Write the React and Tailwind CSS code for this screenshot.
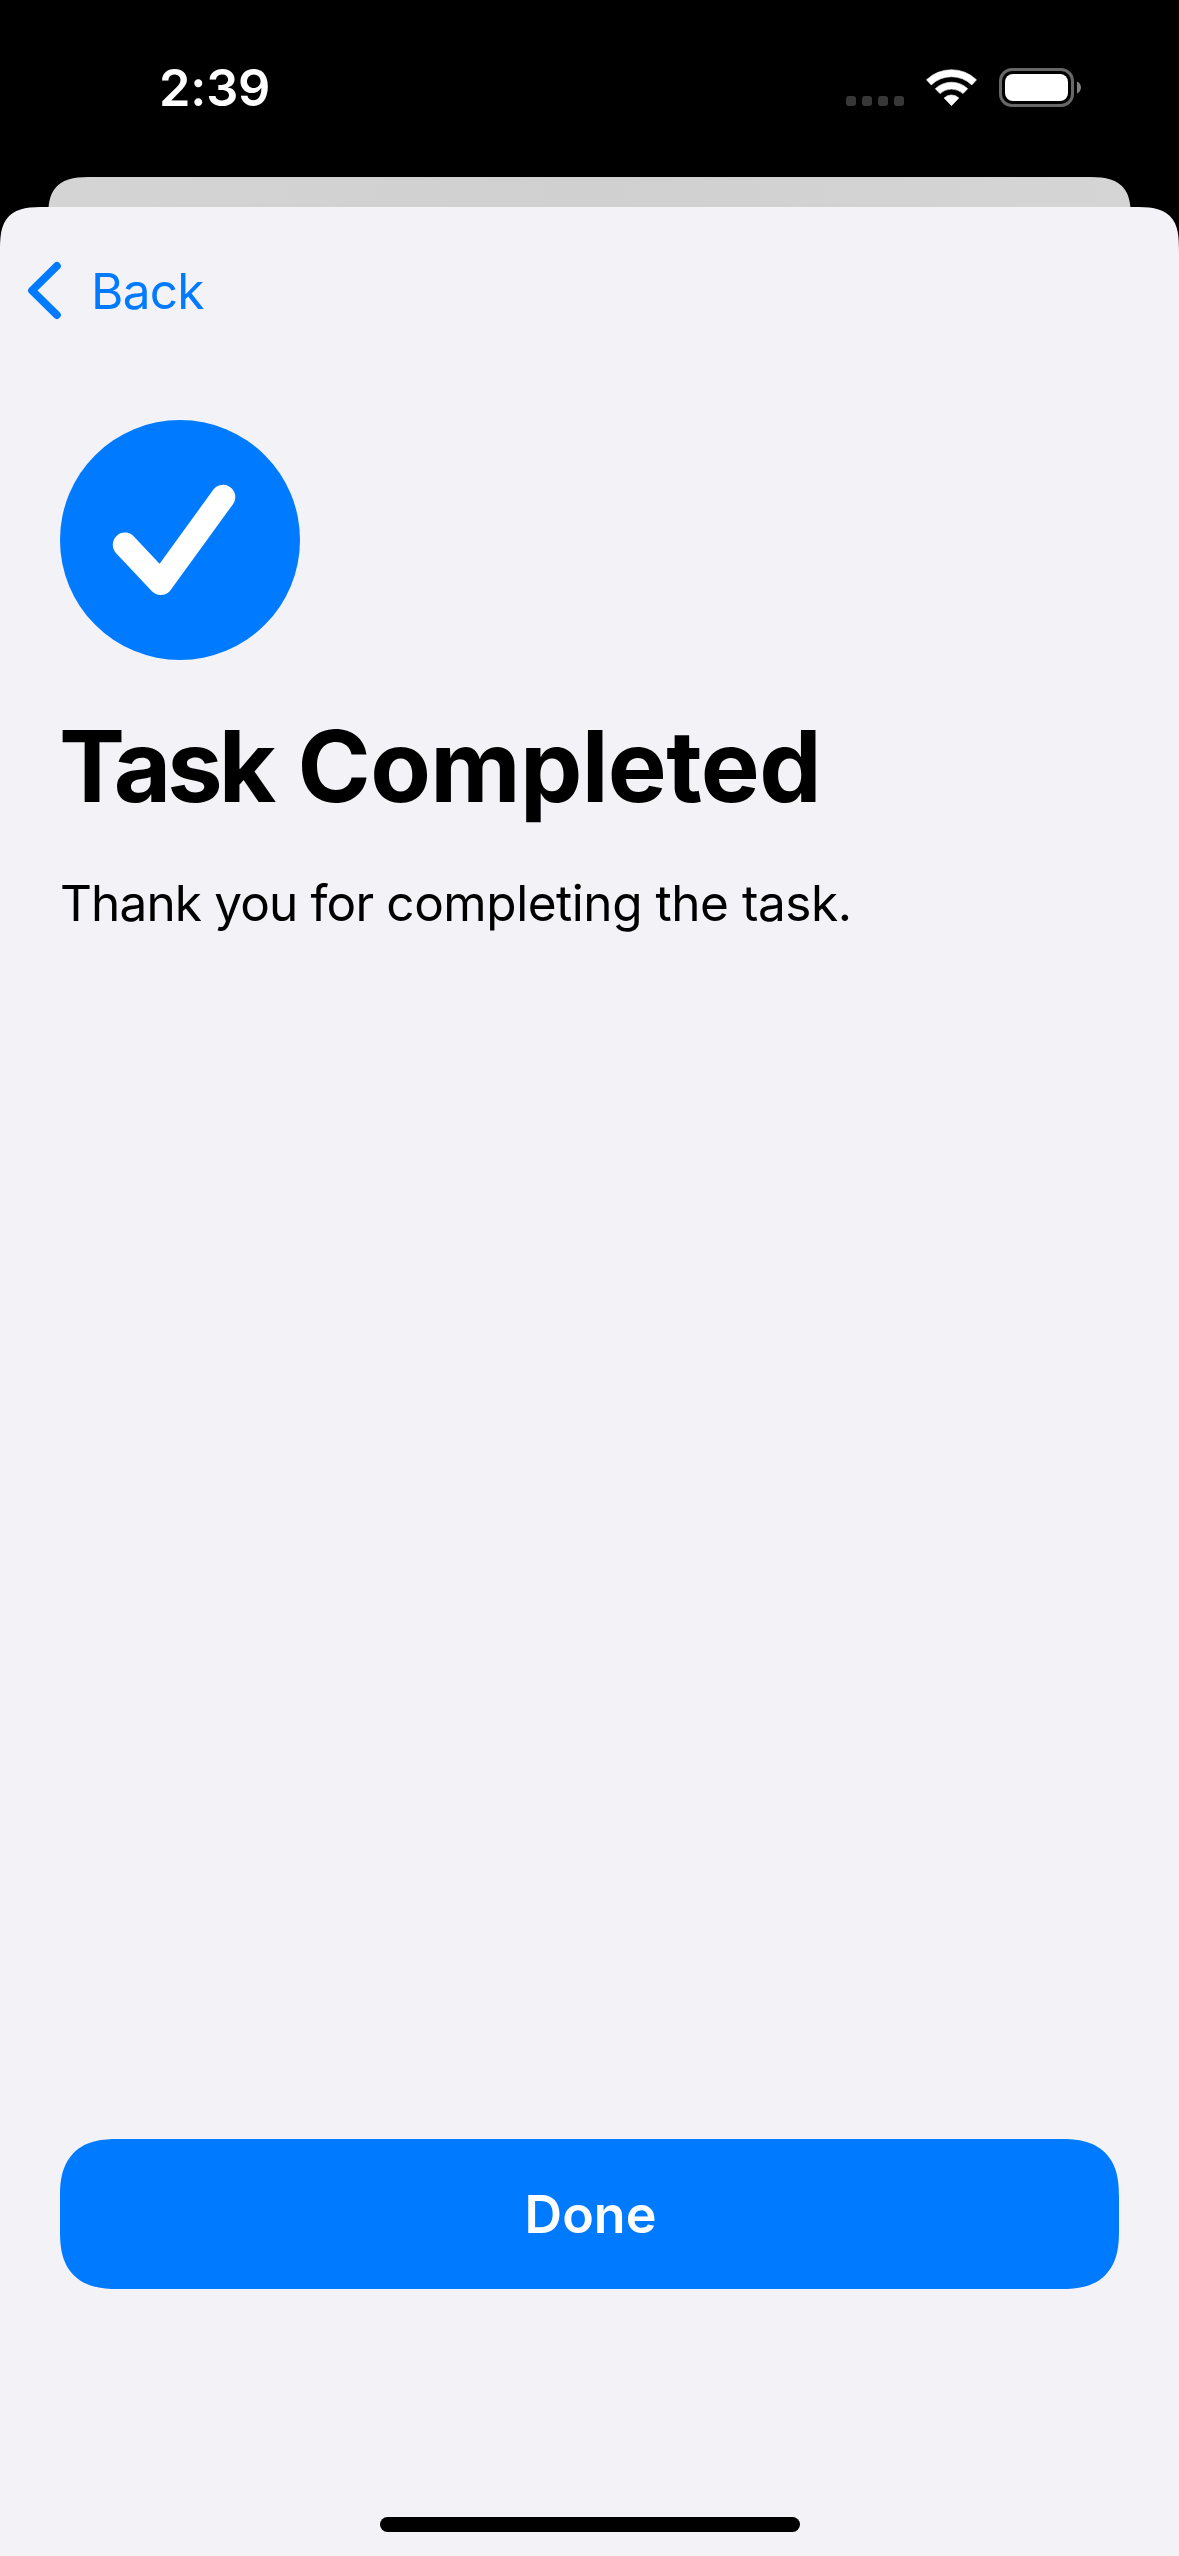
import React from 'react';

function WifiIcon() {
  return (
    <svg width="54" height="40" viewBox="0 0 54 40" fill="#fff" stroke="#fff" strokeWidth="0.6" strokeLinejoin="round">
      <path d="M1.5 12.8A36 36 0 0 1 51.5 12.8L46.8 17.9A29.3 29.3 0 0 0 6.2 17.9Z" />
      <path d="M10.3 21.7A23.5 23.5 0 0 1 42.7 21.7L38 26.6A16.8 16.8 0 0 0 15 26.6Z" />
      <path d="M19.1 31A10.5 10.5 0 0 1 33.9 31L26.5 38.7Z" />
    </svg>
  );
}

function BatteryIcon() {
  return (
    <svg width="83" height="40" viewBox="0 0 83 40">
      <rect x="1.5" y="2.5" width="72" height="36" rx="11.5" fill="none" stroke="#676767" strokeWidth="3" />
      <rect x="6" y="7" width="63" height="27" rx="8" fill="#fff" />
      <path d="M78 14.5C80.6 15.6 82 18 82 20.5C82 23 80.6 25.4 78 26.5Z" fill="#808080" />
    </svg>
  );
}

function StatusBar() {
  return (
    <header className="flex h-[177px] shrink-0 items-start justify-between pl-[159px] pr-[97px]">
      <span className="mt-[58px] text-[50.5px] leading-[60px] font-semibold tracking-[-0.2px] text-white">2:39</span>
      <div className="mt-[67px] flex">
        <div className="mt-[29px] flex gap-1.5">
          {[0, 1, 2, 3].map((dot) => (
            <span key={dot} className="size-[10px] rounded-[3px] bg-[#373737]" />
          ))}
        </div>
        <div className="ml-[21px]">
          <WifiIcon />
        </div>
        <div className="ml-5">
          <BatteryIcon />
        </div>
      </div>
    </header>
  );
}

function NavBar() {
  return (
    <nav className="flex pt-[54px] pl-[26px]">
      <button className="flex items-start text-[#007aff]">
        <svg width="40" height="60" viewBox="0 0 40 60" fill="none" stroke="currentColor" strokeWidth="7.8" strokeLinecap="round" strokeLinejoin="round">
          <path d="M30.9 5L6 29.5L30.9 54" />
        </svg>
        <span className="ml-[25px] text-[49.5px] leading-[60px] tracking-[-0.75px]">Back</span>
      </button>
    </nav>
  );
}

function CheckBadge() {
  return (
    <svg className="block" width="240" height="240" viewBox="0 0 240 240">
      <circle cx="120" cy="120" r="120" fill="#007aff" />
      <path d="M65 124.8L100.8 162.8L163.1 77" fill="none" stroke="#fff" strokeWidth="24.4" strokeLinecap="round" strokeLinejoin="round" />
    </svg>
  );
}

export default function App() {
  return (
    <div className="flex h-[2556px] w-[1179px] flex-col overflow-hidden bg-black font-['Inter',sans-serif]">
      <StatusBar />
      <div className="mx-[48px] h-[30px] shrink-0 overflow-hidden">
        <div className="h-[100px] rounded-[46px] bg-linear-to-r from-[#d4d4d4] via-[#d0d0d0] to-[#d4d5d4] [corner-shape:superellipse(1.65)]" />
      </div>
      <div className="flex flex-1 flex-col rounded-t-[46px] bg-[#f2f2f7] [corner-shape:superellipse(1.65)]">
        <NavBar />
        <main className="flex flex-1 flex-col px-[60px] pt-[99px]">
          <CheckBadge />
          <h1 className="mt-[46px] -ml-px text-[99px] leading-[120px] font-bold tracking-[-0.65px] text-black [word-spacing:2.6px]">
            <span className="tracking-[-4px]">Task</span> Completed
          </h1>
          <p className="mt-[47px] text-[49.5px] leading-[60px] tracking-[-0.45px] text-black">
            <span className="tracking-[-0.85px]">Thank you for </span>completing the task.
          </p>
          <button className="mt-auto flex h-[150px] justify-center rounded-[58px] bg-[#007aff] pt-11 pl-0.5 text-[52px] leading-[63px] font-[560] text-white [corner-shape:superellipse(1.35)]">
            Done
          </button>
        </main>
        <footer className="flex h-[267px] items-end justify-center pb-6">
          <div className="h-[15px] w-[420px] rounded-full bg-black" />
        </footer>
      </div>
    </div>
  );
}
